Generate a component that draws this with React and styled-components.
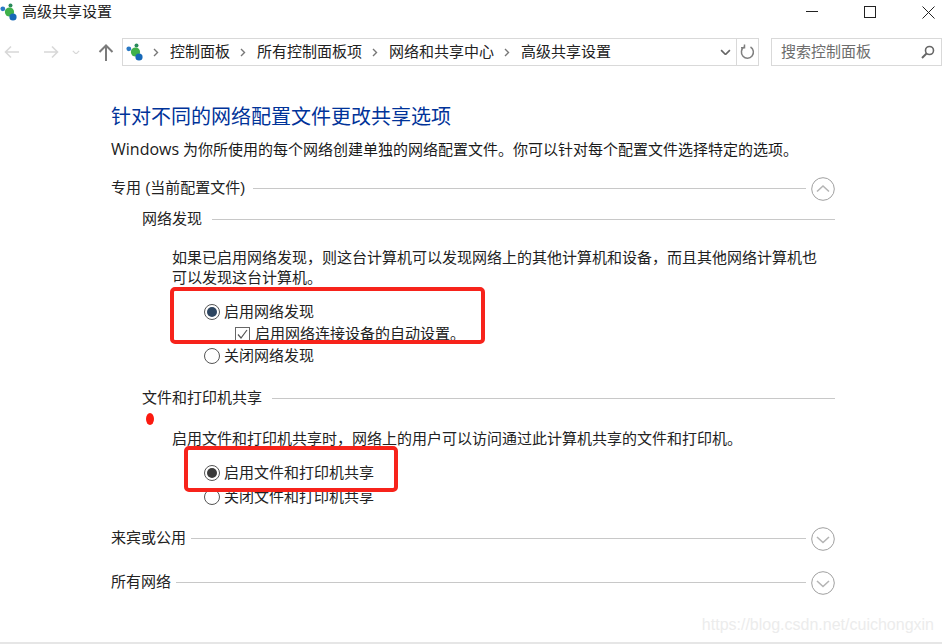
import React from 'react';
import styled, { createGlobalStyle } from 'styled-components';

const Global = createGlobalStyle`
  html, body { margin: 0; padding: 0; background: #fff; }
  body {
    font-family: "Liberation Sans", "Noto Sans CJK SC", sans-serif;
    font-size: 15px;
    line-height: 20px;
    color: #1a1a1a;
    overflow: hidden;
  }
`;

const Win = styled.div`
  position: relative;
  width: 942px;
  height: 644px;
  box-sizing: border-box;
  border-bottom: 2px solid #e6e6e6;
  overflow: hidden;
`;

const TitleBar = styled.div`
  display: flex;
  align-items: center;
  height: 24px;
`;
const TitleText = styled.span`
  margin-left: 4px;
  color: #222;
`;
const WinButtons = styled.div`
  margin-left: auto;
  margin-right: -16px;
  display: flex;
  align-items: center;
`;
const WinBtn = styled.span`
  display: flex;
  justify-content: center;
  width: 58.5px;
`;

const Toolbar = styled.div`
  display: flex;
  align-items: center;
  height: 28px;
  margin-top: 14px;
`;
const NavIcons = styled.div`
  display: flex;
  align-items: center;
  width: 122px;
  flex: none;
`;
const NavSlot = styled.span`
  display: flex;
  margin-left: ${p => p.$left}px;
`;
const AddressBox = styled.div`
  display: flex;
  align-items: center;
  width: 637px;
  height: 28px;
  box-sizing: border-box;
  border: 1px solid #d9d9d9;
  padding-left: 3px;
  flex: none;
`;
const Crumb = styled.span`
  color: #222;
  margin: 0 10px 0 11px;
  white-space: nowrap;
`;
const AddressEnd = styled.div`
  margin-left: auto;
  display: flex;
  align-items: center;
  height: 100%;
`;
const Refresh = styled.div`
  display: flex;
  align-items: center;
  justify-content: center;
  width: 21px;
  height: 100%;
  margin-left: 5px;
  border-left: 1px solid #d9d9d9;
`;
const SearchBox = styled.div`
  display: flex;
  align-items: center;
  justify-content: space-between;
  margin-left: 12px;
  width: 171px;
  height: 28px;
  box-sizing: border-box;
  border: 1px solid #d9d9d9;
  padding: 0 6px 0 9px;
  color: #6d6d6d;
  flex: none;
`;

const Content = styled.main`
  padding: 37px 107px 0 111px;
`;
const Heading = styled.h1`
  margin: 0;
  font-size: 20px;
  font-weight: 400;
  line-height: 28px;
  color: #003399;
`;
const Desc = styled.p`
  margin: 7px -10px 0 0;
  font-family: "Open Sans", "Noto Sans CJK SC", sans-serif;
  line-height: 22px;
  white-space: nowrap;
`;
const DescWord = styled.span`
  font-size: 16px;
`;

const SectionHead = styled.div`
  display: flex;
  align-items: center;
  height: 24px;
  margin-top: ${p => p.$top}px;
  color: #222;
`;
const SectionLabel = styled.span`
  margin-bottom: 3px;
`;
const Rule = styled.span`
  flex: 1;
  height: 1px;
  background: #c8c8c8;
  margin-left: ${p => p.$gap}px;
  margin-bottom: 2px;
`;
const CircleBtn = styled.span`
  display: flex;
  flex: none;
  margin-left: 5px;
`;

const SubHead = styled.div`
  display: flex;
  align-items: center;
  height: 22px;
  margin-top: ${p => p.$top}px;
  margin-left: 31px;
  color: #222;
`;
const SubRule = styled(Rule)`
  margin-left: 10px;
  margin-bottom: 0;
`;
const Para = styled.p`
  margin: ${p => p.$top}px 0 0 61px;
  line-height: 20px;
  color: #222;
`;
const Option = styled.label`
  display: flex;
  align-items: center;
  height: 22px;
  margin-top: ${p => p.$top}px;
  margin-left: 93px;
  color: #222;
`;
const Radio = styled.span`
  position: relative;
  width: 14px;
  height: 14px;
  border: 1px solid #555;
  border-radius: 50%;
  background: #fff;
  margin-right: 4px;
  flex: none;
  &::after {
    content: '';
    display: ${p => (p.$on ? 'block' : 'none')};
    position: absolute;
    inset: 2px;
    border-radius: 50%;
    background: ${p => p.$color};
  }
`;
const CheckRow = styled.label`
  display: flex;
  align-items: center;
  height: 22px;
  margin-left: 124px;
  color: #222;
`;
const CheckBox = styled.span`
  display: flex;
  width: 13px;
  height: 13px;
  border: 1px solid #666;
  margin-right: 5px;
  flex: none;
`;

const RedBox = styled.div`
  position: absolute;
  box-sizing: border-box;
  left: ${p => p.$x}px;
  top: ${p => p.$y}px;
  width: ${p => p.$w}px;
  height: ${p => p.$h}px;
  border: 4px solid #f7231b;
  border-radius: 5px;
`;
const RedDot = styled.div`
  position: absolute;
  left: 146px;
  top: 413px;
  width: 8px;
  height: 12px;
  border-radius: 50%;
  background: #fb1a10;
`;
const Watermark = styled.div`
  position: absolute;
  right: 8px;
  top: 615px;
  font-size: 16px;
  color: #ececec;
`;

const NetIcon = () => (
  <svg width="18" height="18" viewBox="0 0 18 18">
    <line x1="3" y1="6" x2="10" y2="9" stroke="#8fb8d8" strokeWidth="1" />
    <circle cx="2.8" cy="5.8" r="2.4" fill="#2a78c4" />
    <circle cx="10.5" cy="2.5" r="2" fill="#2a8a5a" />
    <circle cx="9.5" cy="9" r="4.6" fill="#3fb14a" />
    <circle cx="13" cy="14" r="3.6" fill="#1668b8" />
  </svg>
);
const ArrowLeft = ({ color = '#d8d8d8', flip }) => (
  <svg width="16" height="14" viewBox="0 0 16 14" style={flip ? { transform: 'scaleX(-1)' } : undefined}>
    <path d="M7 1.5 1.5 7 7 12.5M1.5 7H15" fill="none" stroke={color} strokeWidth="1.6" />
  </svg>
);
const UpArrow = () => (
  <svg width="16" height="17" viewBox="0 0 16 17">
    <path d="M1.5 8 8 1.5 14.5 8M8 1.5V17" fill="none" stroke="#7b7b7b" strokeWidth="2" />
  </svg>
);
const Chev = ({ size = 8, color = '#d8d8d8' }) => (
  <svg width={size} height={size * 0.6} viewBox="0 0 10 6">
    <path d="M1 1l4 4 4-4" fill="none" stroke={color} strokeWidth="1.5" />
  </svg>
);
const Sep = () => (
  <svg width="6" height="9" viewBox="0 0 6 9">
    <path d="M1 1l3.5 3.5L1 8" fill="none" stroke="#777" strokeWidth="1.4" />
  </svg>
);
const Circle = ({ up }) => (
  <svg width="24" height="24" viewBox="0 0 24 24">
    <circle cx="12" cy="12" r="11.3" fill="none" stroke="#a0a0a0" strokeWidth="1" />
    <path d={up ? 'M6 14.5l6-5.5 6 5.5' : 'M6 10l6 5.5L18 10'} fill="none" stroke="#b4b4b4" strokeWidth="1.6" />
  </svg>
);

export default function App() {
  return (
    <Win>
      <Global />
      <TitleBar>
        <NetIcon />
        <TitleText>高级共享设置</TitleText>
        <WinButtons>
          <WinBtn>
            <svg width="12" height="12" viewBox="0 0 12 12"><path d="M0 5.5h12" stroke="#222" /></svg>
          </WinBtn>
          <WinBtn>
            <svg width="12" height="12" viewBox="0 0 12 12"><rect x=".5" y=".5" width="11" height="11" fill="none" stroke="#222" /></svg>
          </WinBtn>
          <WinBtn>
            <svg width="13" height="13" viewBox="0 0 13 13"><path d="M.5.5l12 12M12.5.5l-12 12" stroke="#222" /></svg>
          </WinBtn>
        </WinButtons>
      </TitleBar>

      <Toolbar>
        <NavIcons>
          <NavSlot $left={4}><ArrowLeft /></NavSlot>
          <NavSlot $left={23}><ArrowLeft flip /></NavSlot>
          <NavSlot $left={13}><Chev /></NavSlot>
          <NavSlot $left={18}><UpArrow /></NavSlot>
        </NavIcons>
        <AddressBox>
          <NetIcon />
          <NavSlot $left={9}><Sep /></NavSlot>
          <Crumb>控制面板</Crumb>
          <Sep />
          <Crumb>所有控制面板项</Crumb>
          <Sep />
          <Crumb>网络和共享中心</Crumb>
          <Sep />
          <Crumb>高级共享设置</Crumb>
          <AddressEnd>
            <Chev size={11} color="#666" />
            <Refresh>
              <svg width="15" height="16" viewBox="0 0 15 16">
                <path d="M4 3.2A6 6 0 1 0 10.5 3M4.5 .5v3.3H1" fill="none" stroke="#808080" strokeWidth="1.5" />
              </svg>
            </Refresh>
          </AddressEnd>
        </AddressBox>
        <SearchBox>
          搜索控制面板
          <svg width="14" height="14" viewBox="0 0 14 14">
            <circle cx="8.5" cy="5.5" r="4" fill="none" stroke="#666" strokeWidth="1.6" />
            <path d="M5.5 8.5 1 13" stroke="#666" strokeWidth="2" />
          </svg>
        </SearchBox>
      </Toolbar>

      <Content>
        <Heading>针对不同的网络配置文件更改共享选项</Heading>
        <Desc><DescWord>Windows</DescWord> 为你所使用的每个网络创建单独的网络配置文件。你可以针对每个配置文件选择特定的选项。</Desc>

        <SectionHead $top={17}>
          <SectionLabel>专用 (当前配置文件)</SectionLabel>
          <Rule $gap={8} />
          <CircleBtn><Circle up /></CircleBtn>
        </SectionHead>
        <SubHead $top={7}>网络发现<SubRule /></SubHead>
        <Para $top={18}>
          如果已启用网络发现，则这台计算机可以发现网络上的其他计算机和设备，而且其他网络计算机也
          <br />
          可以发现这台计算机。
        </Para>
        <Option $top={13}><Radio $on $color="#2d4560" />启用网络发现</Option>
        <CheckRow>
          <CheckBox>
            <svg width="13" height="13" viewBox="0 0 13 13"><path d="M2 6.5 5 10l6-8" fill="none" stroke="#555" strokeWidth="1.2" /></svg>
          </CheckBox>
          启用网络连接设备的自动设置。
        </CheckRow>
        <Option $top={0}><Radio />关闭网络发现</Option>
        <SubHead $top={20}>文件和打印机共享<SubRule /></SubHead>
        <Para $top={20}>启用文件和打印机共享时，网络上的用户可以访问通过此计算机共享的文件和打印机。</Para>
        <Option $top={13}><Radio $on $color="#3a3a3a" />启用文件和打印机共享</Option>
        <Option $top={2}><Radio />关闭文件和打印机共享</Option>

        <SectionHead $top={19}>
          <SectionLabel>来宾或公用</SectionLabel>
          <Rule $gap={5} />
          <CircleBtn><Circle /></CircleBtn>
        </SectionHead>
        <SectionHead $top={20}>
          <SectionLabel>所有网络</SectionLabel>
          <Rule $gap={5} />
          <CircleBtn><Circle /></CircleBtn>
        </SectionHead>
      </Content>

      <RedBox $x={170} $y={287} $w={315} $h={57} />
      <RedBox $x={184} $y={446} $w={214} $h={46} />
      <RedDot />
      <Watermark>https://blog.csdn.net/cuichongxin</Watermark>
    </Win>
  );
}
